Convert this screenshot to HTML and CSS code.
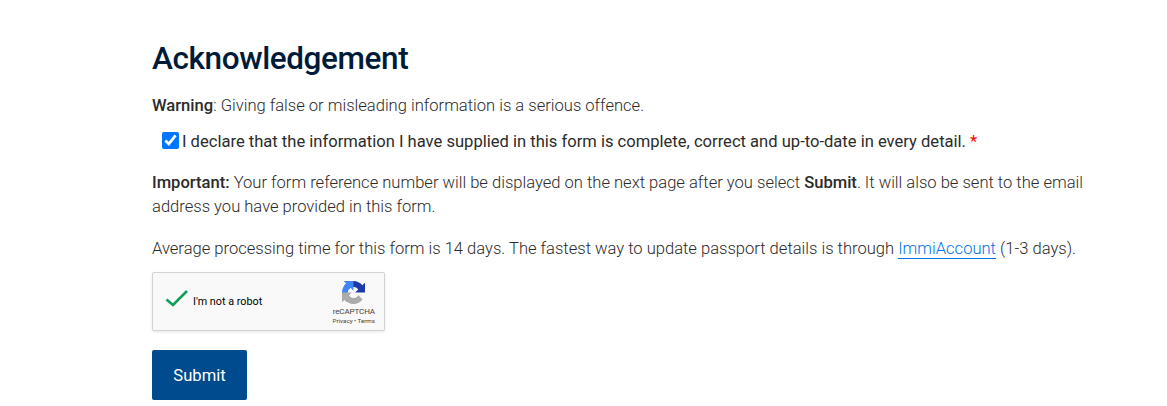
FILE: index.html
```html
<!DOCTYPE html>
<html lang="en">

<head>
	<meta charset="utf-8">
	<title>Acknowledgement</title>
	<link rel="stylesheet" href="styles.css">
</head>

<body>

	<form class="content">
		<h2>Acknowledgement</h2>
		<p class="warning"><strong>Warning</strong>: Giving false or misleading information is a serious offence.</p>

		<div class="declare">
			<input type="checkbox" id="declare" checked>
			<label for="declare">I declare that the information I have supplied in this form is complete, correct and up-to-date in every detail. <span class="required">*</span></label>
		</div>

		<p class="important"><strong>Important:</strong> Your form reference number will be displayed on the next page after you select <strong>Submit</strong>. It will also be sent to the email address you have provided in this form.</p>
		<p class="processing">Average processing time for this form is 14 days. The fastest way to update passport details is through <a href="#">ImmiAccount</a> (1-3 days).</p>

		<div class="captcha">
			<svg class="tick" width="24" height="20" viewBox="0 0 24 20">
				<path d="M1.5 10.5 L8 16 L22 2" fill="none" stroke="#0f9d58" stroke-width="2.6" />
			</svg>
			<span class="captcha-label">I'm not a robot</span>
			<div class="captcha-brand">
				<svg class="captcha-logo" width="23" height="23" viewBox="0 0 64 64">
					<path fill="#1c3aa9" d="M64 31.955l-.033-1.37V4.687l-7.16 7.16C50.948 4.674 42.033.093 32.05.093c-10.4 0-19.622 4.96-25.458 12.64l11.736 11.86a15.55 15.55 0 0 1 4.754-5.334c2.05-1.6 4.952-2.906 8.968-2.906.485 0 .86.057 1.135.163 4.976.393 9.288 3.14 11.828 7.124l-8.307 8.307L64 31.953" />
					<path fill="#4285f4" d="M31.862.094l-1.37.033H4.594l7.16 7.16C4.58 13.147 0 22.06 0 32.046c0 10.4 4.96 19.622 12.64 25.458L24.5 45.768a15.55 15.55 0 0 1-5.334-4.754c-1.6-2.05-2.906-4.952-2.906-8.968 0-.485.057-.86.163-1.135.393-4.976 3.14-9.288 7.124-11.828l8.307 8.307L31.86.095" />
					<path fill="#ababab" d="M.001 32.045l.033 1.37v25.898l7.16-7.16c5.86 7.173 14.774 11.754 24.76 11.754 10.4 0 19.622-4.96 25.458-12.64l-11.736-11.86a15.55 15.55 0 0 1-4.754 5.334c-2.05 1.6-4.952 2.906-8.968 2.906-.485 0-.86-.057-1.135-.163-4.976-.393-9.288-3.14-11.828-7.124l8.307-8.307c-10.522.04-22.4.066-27.295-.005" />
				</svg>
				<span class="captcha-name">reCAPTCHA</span>
				<span class="captcha-links">Privacy • Terms</span>
			</div>
		</div>

		<button type="button" class="submit">Submit</button>
	</form>

</body>

</html>
```
FILE: styles.css
```css
body {
	margin: 0;
	background: #fff;
	color: #2b2b2b;
	font: 300 16.57px/24px Roboto, "Liberation Sans", sans-serif;
}
.content {
	width: 940px;
	padding: 39px 0 0 152px;
}
h2 {
	margin: 0 0 15px;
	color: #001b3a;
	font-size: 31.5px;
	font-weight: 500;
	line-height: 40px;
	letter-spacing: -.4px;
}
p {
	margin: 0;
}
strong {
	font-weight: 500;
}
.declare {
	display: flex;
	align-items: center;
	height: 24px;
	margin: 12px 0 17px 10px;
	font-weight: 400;
}
.declare input {
	width: 17px;
	height: 17px;
	margin: 0 3px 3px 0;
}
.required {
	color: #f00;
}
.important {
	margin-bottom: 18px;
}
a {
	color: #0073e6;
	text-decoration: none;
	border-bottom: 1px solid #0073e6;
}
.captcha {
	display: flex;
	box-sizing: border-box;
	width: 233px;
	height: 59px;
	margin: 11px 0 19px;
	padding: 8px 9px 0 12px;
	background: #f9f9f9;
	border: 1px solid #d3d3d3;
	border-radius: 2px;
	box-shadow: 0 1px 3px rgba(0, 0, 0, .1);
	color: #000;
	font-weight: 400;
}
.tick {
	margin-top: 8px;
}
.captcha-label {
	margin: 9px 0 0 4px;
	font-size: 10.8px;
	line-height: 23px;
}
.captcha-brand {
	display: flex;
	flex-direction: column;
	align-items: center;
	margin-left: auto;
	color: #444;
}
.captcha-name {
	margin-top: 3px;
	font-size: 8px;
	line-height: 10px;
	letter-spacing: -.1px;
}
.captcha-links {
	font-size: 6.2px;
	line-height: 9px;
}
.submit {
	display: block;
	width: 95px;
	height: 50px;
	padding: 0;
	background: #004b8d;
	border: 0;
	border-radius: 2px;
	color: #fff;
	font: 400 16.6px Roboto, "Liberation Sans", sans-serif;
}
```
